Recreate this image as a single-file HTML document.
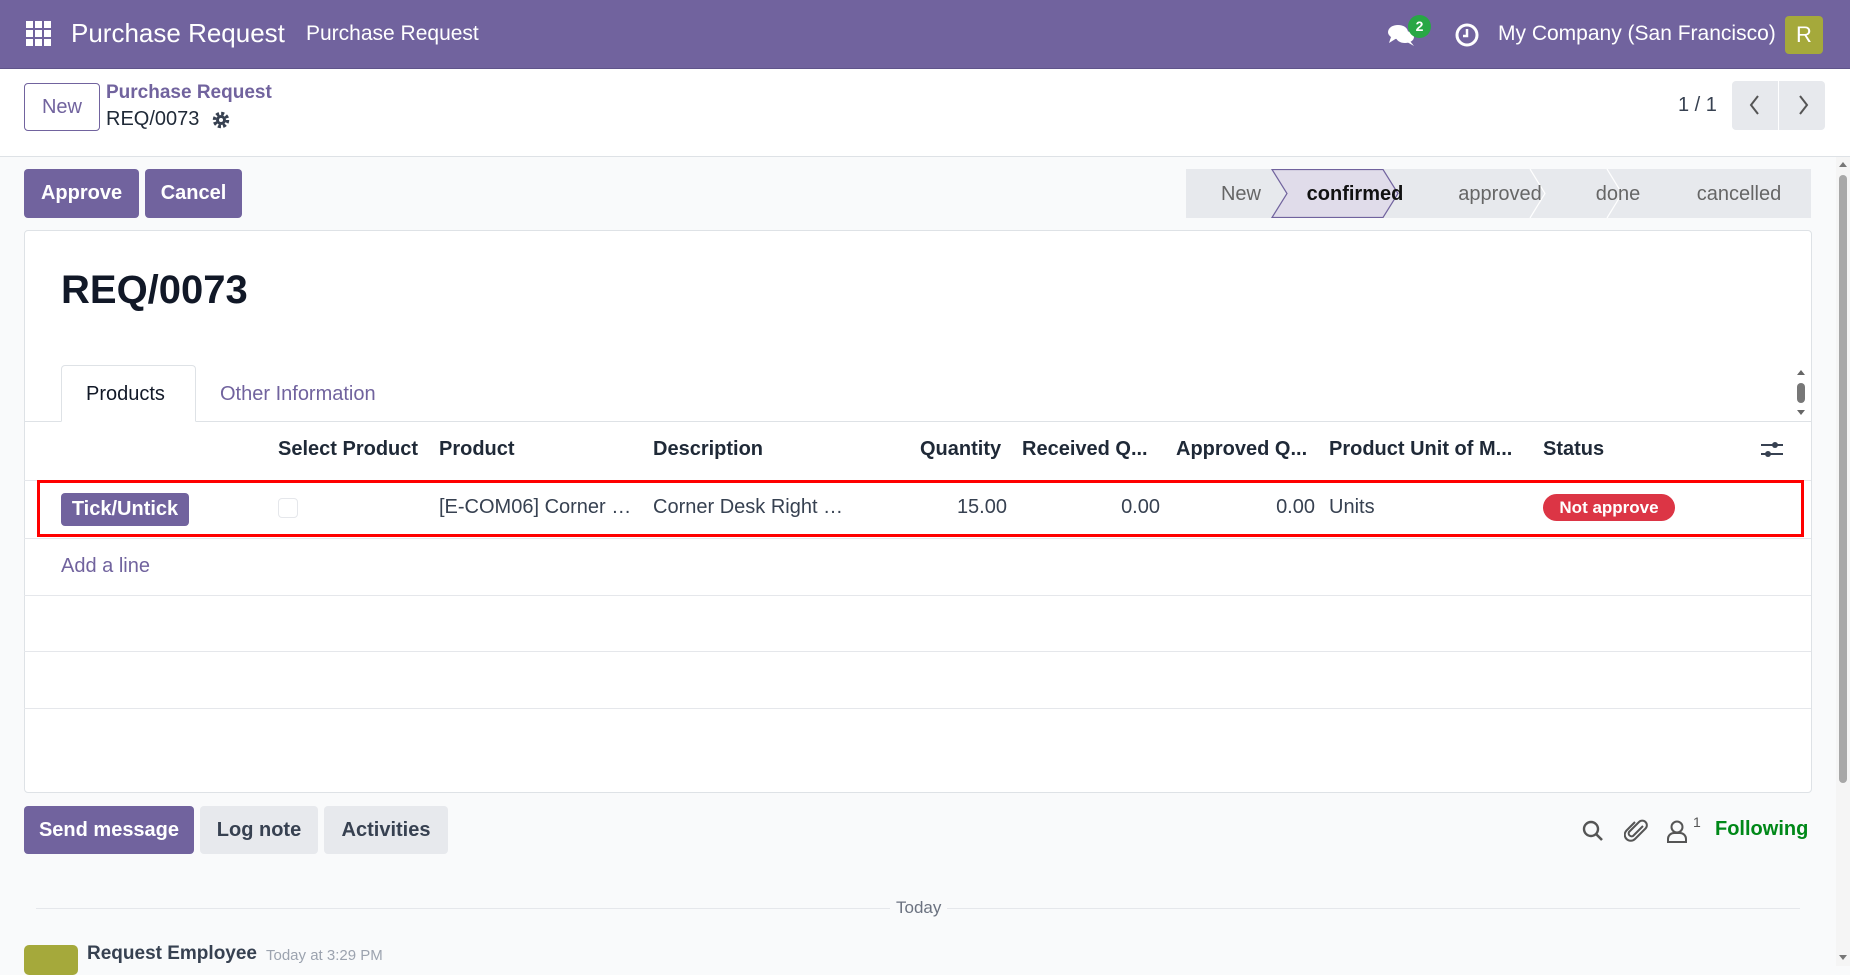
<!DOCTYPE html>
<html><head><meta charset="utf-8"><style>
*{box-sizing:border-box;margin:0;padding:0}
body{width:1850px;height:966px;overflow:hidden;background:#f9fafb;font-family:"Liberation Sans",sans-serif;color:#374151;position:relative;font-size:20px}
.a{position:absolute;white-space:nowrap}
.nav{left:0;top:0;width:1850px;height:69px;background:#71639e;border-bottom:1px solid #5f548a}
.cp{left:0;top:69px;width:1850px;height:88px;background:#fff;border-bottom:1px solid #dee2e6}
.btn{position:absolute;border-radius:4px;display:flex;align-items:center;justify-content:center;font-size:20px;font-weight:bold}
.pri{background:#71639e;color:#fff}
.sec{background:#e7e9ed;color:#374151}
.card{left:24px;top:230px;width:1788px;height:563px;background:#fff;border:1px solid #dee2e6;border-radius:4px}
.hl{position:absolute;left:24px;width:1787px;height:1px;background:#e5e7eb}
.th{font-weight:bold;color:#1f2937;top:438px}
.td{top:496px;color:#374151}
</style></head><body>
<div class="a nav"></div>
<svg class="a" style="left:26px;top:21px" width="26" height="26" viewBox="0 0 26 26" fill="#fff"><rect x="0" y="0" width="7" height="7"/><rect x="9" y="0" width="7" height="7"/><rect x="18" y="0" width="7" height="7"/><rect x="0" y="9" width="7" height="7"/><rect x="9" y="9" width="7" height="7"/><rect x="18" y="9" width="7" height="7"/><rect x="0" y="18" width="7" height="7"/><rect x="9" y="18" width="7" height="7"/><rect x="18" y="18" width="7" height="7"/></svg>
<div class="a" style="left:71px;top:18px;color:#fff;font-size:26px">Purchase Request</div>
<div class="a" style="left:306px;top:22px;color:#fff;font-size:21px">Purchase Request</div>
<svg class="a" style="left:1387px;top:22px" width="30" height="26" viewBox="0 0 30 26" fill="#fff"><ellipse cx="11" cy="10" rx="10" ry="7"/><path d="M4 15 L2 21 L10 16Z"/><ellipse cx="18" cy="15" rx="9" ry="6"/><path d="M23 19 L27 24 L20 20Z"/></svg>
<div class="a" style="left:1408px;top:15px;width:23px;height:23px;border-radius:50%;background:#28a745;color:#fff;font-size:14px;font-weight:bold;text-align:center;line-height:23px">2</div>
<svg class="a" style="left:1454px;top:22px" width="26" height="26" viewBox="0 0 26 26"><circle cx="13" cy="13" r="10" fill="none" stroke="#fff" stroke-width="3"/><path d="M13 7v7h-4" fill="none" stroke="#fff" stroke-width="2.5"/></svg>
<div class="a" style="left:1498px;top:22px;color:#fff;font-size:21px">My Company (San Francisco)</div>
<div class="a" style="left:1785px;top:16px;width:38px;height:38px;background:#a5a93b;border-radius:4px;color:#fff;font-size:22px;text-align:center;line-height:38px">R</div>

<div class="a cp"></div>
<div class="btn" style="left:24px;top:83px;width:76px;height:48px;border:1px solid #71639e;color:#71639e;background:#fff;font-weight:normal">New</div>
<div class="a" style="left:106px;top:82px;color:#71639e;font-weight:bold;font-size:19px">Purchase Request</div>
<div class="a" style="left:106px;top:108px;color:#1f2937;font-size:20px">REQ/0073</div>
<svg class="a" style="left:211px;top:110px" width="20" height="20" viewBox="0 0 20 20"><circle cx="10" cy="10" r="6.5" fill="none" stroke="#374151" stroke-width="3.5" stroke-dasharray="3 2.1"/><circle cx="10" cy="10" r="5" fill="#374151"/><circle cx="10" cy="10" r="2" fill="#fff"/></svg>
<div class="a" style="left:1678px;top:94px;color:#374151;font-size:20px">1 / 1</div>
<div class="a" style="left:1732px;top:81px;width:93px;height:49px;background:#e7e9ed;border-radius:4px"></div>
<div class="a" style="left:1778px;top:81px;width:1px;height:49px;background:#fff"></div>
<svg class="a" style="left:1745px;top:93px" width="20" height="24" viewBox="0 0 20 24"><path d="M13 3 L6 12 L13 21" fill="none" stroke="#555" stroke-width="2"/></svg>
<svg class="a" style="left:1793px;top:93px" width="20" height="24" viewBox="0 0 20 24"><path d="M7 3 L14 12 L7 21" fill="none" stroke="#555" stroke-width="2"/></svg>

<div class="btn pri" style="left:24px;top:169px;width:115px;height:49px">Approve</div>
<div class="btn pri" style="left:145px;top:169px;width:97px;height:49px">Cancel</div>

<svg class="a" style="left:1186px;top:169px" width="625" height="49" viewBox="0 0 625 49">
<rect x="0" y="0" width="625" height="49" fill="#e7e9ed"/>
<path d="M86 0.5 H197 L212 24.5 L197 48.5 H86 L101 24.5Z" fill="#e0dcea" stroke="#71639e" stroke-width="1.2"/>
<path d="M344 0 L359 24.5 L344 49" fill="none" stroke="#fff" stroke-width="1.2"/>
<path d="M421 0 L436 24.5 L421 49" fill="none" stroke="#fff" stroke-width="1.2"/>
<text x="55" y="31" font-family="Liberation Sans" font-size="20" fill="#666" text-anchor="middle">New</text>
<text x="169" y="31" font-family="Liberation Sans" font-size="20" fill="#111" font-weight="bold" text-anchor="middle">confirmed</text>
<text x="314" y="31" font-family="Liberation Sans" font-size="20" fill="#666" text-anchor="middle">approved</text>
<text x="432" y="31" font-family="Liberation Sans" font-size="20" fill="#666" text-anchor="middle">done</text>
<text x="553" y="31" font-family="Liberation Sans" font-size="20" fill="#666" text-anchor="middle">cancelled</text>
</svg>

<div class="a card"></div>
<div class="a" style="left:61px;top:268px;font-size:40px;font-weight:bold;color:#111827">REQ/0073</div>
<div class="a" style="left:24px;top:421px;width:1787px;height:1px;background:#dee2e6"></div>
<div class="a" style="left:61px;top:365px;width:135px;height:57px;background:#fff;border:1px solid #dee2e6;border-bottom:1px solid #fff;border-radius:4px 4px 0 0"></div>
<div class="a" style="left:86px;top:383px;color:#111827">Products</div>
<div class="a" style="left:220px;top:383px;color:#71639e">Other Information</div>
<div class="a" style="left:1797px;top:370px;width:0;height:0;border:4px solid transparent;border-bottom:5px solid #666;border-top:0"></div>
<div class="a" style="left:1797px;top:383px;width:8px;height:20px;background:#777;border-radius:4px"></div>
<div class="a" style="left:1797px;top:410px;width:0;height:0;border:4px solid transparent;border-top:5px solid #666;border-bottom:0"></div>

<div class="a th" style="left:278px">Select Product</div>
<div class="a th" style="left:439px">Product</div>
<div class="a th" style="left:653px">Description</div>
<div class="a th" style="left:920px">Quantity</div>
<div class="a th" style="left:1022px">Received Q...</div>
<div class="a th" style="left:1176px">Approved Q...</div>
<div class="a th" style="left:1329px">Product Unit of M...</div>
<div class="a th" style="left:1543px">Status</div>
<svg class="a" style="left:1760px;top:440px" width="24" height="20" viewBox="0 0 24 20"><path d="M1 5h22M1 14h22" stroke="#374151" stroke-width="2"/><circle cx="15" cy="5" r="3" fill="#374151"/><circle cx="8" cy="14" r="3" fill="#374151"/></svg>
<div class="hl" style="top:480px"></div>

<div class="btn pri" style="left:61px;top:493px;width:128px;height:33px;font-size:20px">Tick/Untick</div>
<div class="a" style="left:278px;top:498px;width:20px;height:20px;border:1px solid #e5e7eb;border-radius:4px"></div>
<div class="a td" style="left:439px">[E-COM06] Corner …</div>
<div class="a td" style="left:653px">Corner Desk Right …</div>
<div class="a td" style="left:955px;width:52px;text-align:right">15.00</div>
<div class="a td" style="left:1100px;width:60px;text-align:right">0.00</div>
<div class="a td" style="left:1255px;width:60px;text-align:right">0.00</div>
<div class="a td" style="left:1329px">Units</div>
<div class="a" style="left:1543px;top:494px;width:132px;height:27px;background:#dc3545;border-radius:14px;color:#fff;font-size:17px;font-weight:bold;text-align:center;line-height:27px">Not approve</div>
<div class="a" style="left:37px;top:480px;width:1767px;height:57px;border:3px solid #f00"></div>
<div class="hl" style="top:538px"></div>
<div class="a" style="left:61px;top:555px;color:#71639e">Add a line</div>
<div class="hl" style="top:595px"></div>
<div class="hl" style="top:651px"></div>
<div class="hl" style="top:708px"></div>

<div class="btn pri" style="left:24px;top:806px;width:170px;height:48px">Send message</div>
<div class="btn sec" style="left:200px;top:806px;width:118px;height:48px">Log note</div>
<div class="btn sec" style="left:324px;top:806px;width:124px;height:48px">Activities</div>
<svg class="a" style="left:1581px;top:819px" width="24" height="24" viewBox="0 0 24 24"><circle cx="10" cy="10" r="7" fill="none" stroke="#555" stroke-width="2.4"/><path d="M15 15 L21 21" stroke="#555" stroke-width="2.6"/></svg>
<svg class="a" style="left:1624px;top:818px" width="26" height="26" viewBox="0 0 26 26"><path d="M19 8 L9 18 a3 3 0 0 1 -4 -4 L15 4 a4.5 4.5 0 0 1 6.5 6.5 L11 21 a6 6 0 0 1 -8.5 -8.5 L11 4" fill="none" stroke="#555" stroke-width="2"/></svg>
<svg class="a" style="left:1666px;top:819px" width="22" height="24" viewBox="0 0 22 24"><circle cx="11" cy="8" r="5.5" fill="none" stroke="#555" stroke-width="2"/><path d="M2 23 v-3 a6 6 0 0 1 6 -6 h6 a6 6 0 0 1 6 6 v3Z" fill="none" stroke="#555" stroke-width="2"/></svg>
<div class="a" style="left:1693px;top:814px;font-size:14px;color:#555">1</div>
<div class="a" style="left:1715px;top:818px;color:#008818;font-weight:bold;font-size:20px">Following</div>

<div class="a" style="left:36px;top:908px;width:1764px;height:1px;background:#e5e7eb"></div>
<div class="a" style="left:890px;top:898px;padding:0 6px;background:#f9fafb;color:#6b7280;font-size:17px">Today</div>
<div class="a" style="left:24px;top:945px;width:54px;height:30px;background:#a5a93b;border-radius:5px"></div>
<div class="a" style="left:87px;top:943px;font-weight:bold;color:#374151;font-size:19px">Request Employee</div>
<div class="a" style="left:266px;top:947px;color:#9ca3af;font-size:15px">Today at 3:29 PM</div>

<div class="a" style="left:1836px;top:157px;width:14px;height:809px;background:#f5f5f5"></div>
<div class="a" style="left:1839px;top:162px;width:0;height:0;border:4px solid transparent;border-bottom:5px solid #777;border-top:0"></div>
<div class="a" style="left:1839px;top:175px;width:8px;height:608px;background:#a8a8a8;border-radius:4px"></div>
<div class="a" style="left:1839px;top:955px;width:0;height:0;border:4px solid transparent;border-top:5px solid #777;border-bottom:0"></div>
</body></html>
